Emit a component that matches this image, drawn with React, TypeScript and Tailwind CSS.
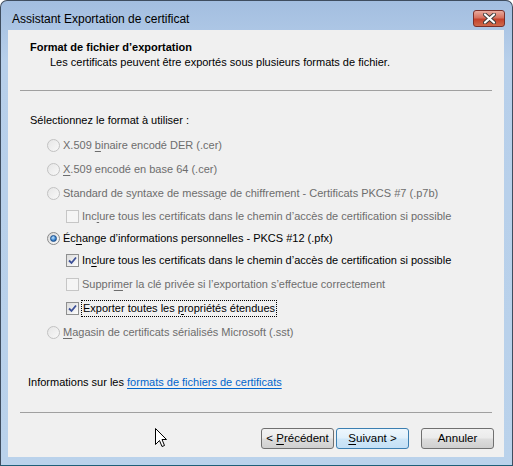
import React from 'react';

const FONT = { fontFamily: '"Liberation Sans", Arial, sans-serif' };

// underline one mnemonic letter
const M: React.FC<{ children: React.ReactNode }> = ({ children }) => (
  <span className="underline underline-offset-[2px]">{children}</span>
);

const Radio: React.FC<{ checked?: boolean; disabled?: boolean }> = ({ checked, disabled }) => (
  <span
    className={
      'flex h-[13px] w-[13px] shrink-0 items-center justify-center rounded-full border ' +
      (disabled
        ? 'border-[#c2c2c2] bg-[linear-gradient(135deg,#e6e6e6,#f8f8f8)]'
        : 'border-[#8a8a8a] bg-[linear-gradient(135deg,#d8d8d8,#fbfbfb)]')
    }
  >
    {checked && (
      <span className="h-[7px] w-[7px] rounded-full border border-[#1d4f8c] bg-[radial-gradient(circle_at_40%_35%,#c4e6ff,#3c86d0_55%,#12427f)]" />
    )}
  </span>
);

const Check: React.FC<{ checked?: boolean; disabled?: boolean }> = ({ checked, disabled }) => (
  <span
    className={
      'flex h-[13px] w-[13px] shrink-0 items-center justify-center border ' +
      (disabled
        ? 'border-[#c6c6c6] bg-[#f5f5f5]'
        : 'border-[#8e8f8f] bg-[linear-gradient(135deg,#dcdcdc,#fdfdfd)]')
    }
  >
    {checked && (
      <svg width="9" height="9" viewBox="0 0 9 9">
        <path d="M1 4.5 L3.5 7 L8 1.5" fill="none" stroke="#3b4f97" strokeWidth="1.8" />
      </svg>
    )}
  </span>
);

const Btn: React.FC<{ focused?: boolean; children: React.ReactNode }> = ({ focused, children }) => (
  <div
    className={
      'flex h-[21px] w-[73px] items-center justify-center rounded-[3px] border text-[11.5px] text-black ' +
      (focused
        ? 'border-[#3c7fb1] bg-[linear-gradient(#eef7fd,#e0f0fb_48%,#cfe7f8_52%,#c4e0f6)]'
        : 'border-[#707070] bg-[linear-gradient(#f2f2f2,#ebebeb_48%,#dddddd_52%,#cfcfcf)]')
    }
  >
    {children}
  </div>
);

export default function App() {
  const gray = 'text-[#6d6d6d]';
  return (
    <div className="h-[466px] w-[513px] bg-white" style={FONT}>
      <div className="flex h-[466px] w-[513px] flex-col rounded-t-[7px] border border-[#3f4d5f] border-b-[#1f5f78] bg-[linear-gradient(#a3bee0,#b7cfea_60px,#bad2eb)]">
        {/* title bar */}
        <div className="flex h-[29px] items-start justify-between">
          <span className="pl-[11px] pt-[11px] text-[12px] leading-[15px] text-black">
            Assistant Exportation de certificat
          </span>
          <div className="mr-[7px] mt-[9px] flex h-[17px] w-[32px] items-center justify-center rounded-[3px] border border-[#7a2f2a] bg-[linear-gradient(#e9aa9e,#d6715f_45%,#c4412c_55%,#cf6a4b)]">
            <svg width="13" height="11" viewBox="0 0 13 11">
              <path d="M2 1.5 L11 9.5 M11 1.5 L2 9.5" stroke="#3a3a3a" strokeWidth="4" strokeLinecap="round" />
              <path d="M2 1.5 L11 9.5 M11 1.5 L2 9.5" stroke="#ffffff" strokeWidth="2.2" strokeLinecap="round" />
            </svg>
          </div>
        </div>

        {/* client area */}
        <div className="px-[7px]">
          <div className="relative flex h-[427px] w-[496px] flex-col bg-[#f0f0f0] text-[11px] leading-[15px] text-black">
            <div className="pl-[22px] pt-[10px]">
              <div className="font-bold">Format de fichier d’exportation</div>
              <div className="pl-[20px]">Les certificats peuvent être exportés sous plusieurs formats de fichier.</div>
            </div>
            <div className="mx-[12px] mt-[20px] h-px bg-[#a0a0a0]" />

            <div className="mt-[22px] pl-[22px]">Sélectionnez le format à utiliser :</div>

            <div className="mt-[5px] flex flex-col">
              <div className={'flex h-[24px] items-center gap-[3px] pl-[39px] ' + gray}>
                <Radio disabled />
                <span>X.509 <M>b</M>inaire encodé DER (.cer)</span>
              </div>
              <div className={'flex h-[24px] items-center gap-[3px] pl-[39px] ' + gray}>
                <Radio disabled />
                <span><M>X</M>.509 encodé en base 64 (.cer)</span>
              </div>
              <div className={'flex h-[24px] items-center gap-[3px] pl-[39px] ' + gray}>
                <Radio disabled />
                <span>Standard de syntaxe de messa<M>g</M>e de chiffrement - Certificats PKCS #7 (.p7b)</span>
              </div>
              <div className={'flex h-[22px] items-center gap-[3px] pl-[58px] ' + gray}>
                <Check disabled />
                <span>Inc<M>l</M>ure tous les certificats dans le chemin d’accès de certification si possible</span>
              </div>
              <div className="flex h-[22px] items-center gap-[3px] pl-[39px]">
                <Radio checked />
                <span>Éc<M>h</M>ange d’informations personnelles - PKCS #12 (.pfx)</span>
              </div>
              <div className="flex h-[23px] items-center gap-[3px] pl-[58px]">
                <Check checked />
                <span>In<M>c</M>lure tous les certificats dans le chemin d’accès de certification si possible</span>
              </div>
              <div className={'flex h-[24px] items-center gap-[3px] pl-[58px] ' + gray}>
                <Check disabled />
                <span>Suppri<M>m</M>er la clé privée si l’exportation s’effectue correctement</span>
              </div>
              <div className="flex h-[24px] items-center gap-[2px] pl-[58px]">
                <Check checked />
                <span className="border border-dotted border-black px-px">Exporter toutes les <M>p</M>ropriétés étendues</span>
              </div>
              <div className={'flex h-[24px] items-center gap-[3px] pl-[39px] ' + gray}>
                <Radio disabled />
                <span><M>M</M>agasin de certificats sérialisés Microsoft (.sst)</span>
              </div>
            </div>

            <div className="mt-[31px] pl-[20px]">
              Informations sur les{' '}
              <span className="text-[#0066cc] underline underline-offset-[2px]">formats de fichiers de certificats</span>
            </div>

            <div className="mx-[12px] mt-[22px] h-px bg-[#a0a0a0]" />

            <div className="mt-[15px] flex justify-end pr-[10px]">
              <div className="flex gap-[2px]">
                <Btn>
                  <span className="whitespace-pre">{'< '}</span>
                  <M>P</M>récédent
                </Btn>
                <Btn focused>
                  <M>S</M>
                  <span className="whitespace-pre">{'uivant >'}</span>
                </Btn>
              </div>
              <div className="ml-[12px]">
                <Btn>Annuler</Btn>
              </div>
            </div>

            {/* mouse pointer */}
            <svg className="absolute left-[147px] top-[398px]" width="13" height="20" viewBox="0 0 13 20">
              <path d="M0.5 0.5 L0.5 16.5 L4.5 12.5 L7 18.5 L9.5 17.5 L7 11.5 L11.5 11.5 Z" fill="#ffffff" stroke="#000000" strokeWidth="1" />
            </svg>
          </div>
        </div>
      </div>
    </div>
  );
}
